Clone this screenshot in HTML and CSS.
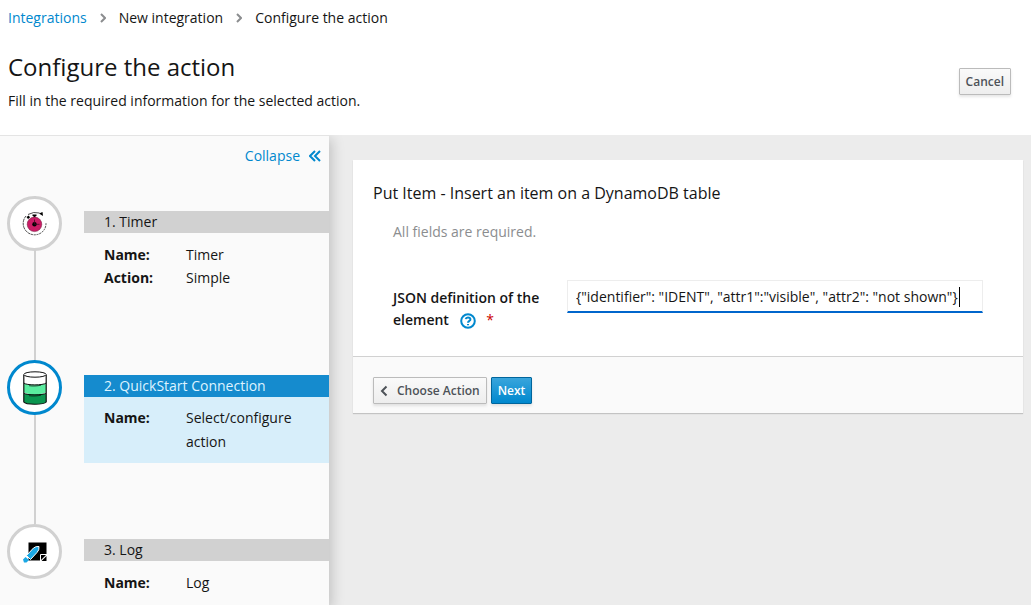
FILE: index.html
```html
<!DOCTYPE html>
<html lang="en">
<head>
<meta charset="utf-8">
<title>Configure the action</title>
<link rel="stylesheet" href="styles.css">
</head>
<body>
<header class="page-header">
  <nav aria-label="Breadcrumb">
    <ol class="breadcrumb">
      <li><a href="#">Integrations</a></li>
      <li><svg class="separator" viewBox="0 0 6 10" aria-hidden="true"><path d="M1 1l4 4-4 4"/></svg>New integration</li>
      <li><svg class="separator" viewBox="0 0 6 10" aria-hidden="true"><path d="M1 1l4 4-4 4"/></svg>Configure the action</li>
    </ol>
  </nav>
  <div class="title-row">
    <div>
      <h1>Configure the action</h1>
      <p>Fill in the required information for the selected action.</p>
    </div>
    <button class="btn" type="button">Cancel</button>
  </div>
</header>
<div class="workspace">
  <aside class="sidebar">
    <button class="collapse" type="button">Collapse
      <svg viewBox="0 0 12 12" aria-hidden="true"><path d="M6 1L1 6l5 5M11 1L6 6l5 5"/></svg>
    </button>
    <ol class="steps">
      <li class="step">
        <div class="rail"><span class="circle">
          <svg viewBox="0 0 26 26" aria-hidden="true"><g fill="none" stroke="#222" stroke-width=".8"><path d="M4 5A11.300 11.300 0 0 0 9 23.200" stroke-dasharray="3 .6"/><path d="M9 23.200A11.300 11.300 0 0 0 24 12" stroke-dasharray="2 .8"/><path d="M6 3.500Q11.500 .300 17.500 2"/></g><path d="M17 2.500l3.500-1.500.5 4z"/><path d="M4.500 6l2.300-1.500 1.200 2-2 1.500zM10.500 3.500h4v1.500h-1v2h-2V5h-1z"/><circle cx="12.500" cy="13.300" r="7.300" fill="#cb1c66" stroke="#6b1838" stroke-width=".5"/><circle cx="12.500" cy="13.300" r="2.200"/><path d="M12.500 8.500v4.800H17.500" fill="none" stroke="#400c24" stroke-width=".8"/></svg>
        </span></div>
        <div class="details">
          <h2>1. Timer</h2>
          <dl><dt>Name:</dt><dd>Timer</dd><dt>Action:</dt><dd>Simple</dd></dl>
        </div>
      </li>
      <li class="step active">
        <div class="rail"><span class="circle">
          <svg class="database" viewBox="0 0 24 34" aria-hidden="true"><path d="M.8 23v8c2 3 20 3 22.400 0v-8" fill="#0b9650"/><path d="M.8 13v8c2 3 20 3 22.400 0v-8" fill="#5bec9f"/><path d="M.8 4v8c2 2.500 20 2.500 22.400 0V4" fill="#fff"/><g fill="none" stroke="#111"><path d="M.8 4v27c2 3 20 3 22.400 0V4" stroke-width="1.200"/><ellipse cx="12" cy="3.500" rx="11.200" ry="2.700" fill="#fff" stroke-width="1"/><path d="M.8 12c2 2.500 20 2.500 22.400 0M.8 22c2 2.500 20 2.500 22.400 0"/><path d="M6 14.700c4 .6 8 .4 12-.5M6 24.700c4 .6 8 .4 12-.5" stroke-width=".7"/></g></svg>
        </span></div>
        <div class="details">
          <h2>2. QuickStart Connection</h2>
          <dl><dt>Name:</dt><dd>Select/configure action</dd></dl>
        </div>
      </li>
      <li class="step">
        <div class="rail"><span class="circle">
          <svg viewBox="0 0 26 26" aria-hidden="true"><path d="M6.500 3.500h18v12l-6 6h-12z"/><path d="M24.500 17v5H19.500z"/><path d="M18.500 22v-6.500H25" fill="none" stroke="#fff"/><path d="M4.500 16.500L11.500 9Q14 7 17 7.500Q17.500 11 15 13.500L8.500 20.500Z" fill="#1ba8e5" stroke="#fff"/><path d="M1 20.500l2.500-2.500L7 21l-2.500 2.500H2z" fill="#1ba8e5"/></svg>
        </span></div>
        <div class="details">
          <h2>3. Log</h2>
          <dl><dt>Name:</dt><dd>Log</dd></dl>
        </div>
      </li>
    </ol>
  </aside>
  <main>
    <form class="card">
      <div class="card-body">
        <h2>Put Item - Insert an item on a DynamoDB table</h2>
        <p class="hint">All fields are required.</p>
        <div class="field">
          <label for="definition">JSON definition of the element
            <svg class="help" viewBox="0 0 16 16" aria-hidden="true"><circle cx="8" cy="8" r="6.800"/><path d="M5.700 6.200Q6 4.500 8 4.500C11 4.500 11 7 9.300 8Q8 8.700 8 9.700M8 10.900v1.400"/></svg>
            <span class="required">*</span></label>
          <div class="control">
            <input id="definition" type="text" required autofocus value='{"identifier": "IDENT", "attr1":"visible", "attr2": "not shown"}'>
            <span class="caret"></span>
          </div>
        </div>
      </div>
      <footer>
        <button class="btn" type="button"><svg class="back" viewBox="0 0 8 12" aria-hidden="true"><path d="M6.500 1.500L2 6l4.500 4.500"/></svg>Choose Action</button>
        <button class="btn primary" type="button">Next</button>
      </footer>
    </form>
  </main>
</div>
</body>
</html>
```
FILE: styles.css
```css
* { box-sizing: border-box; }
body {
  margin: 0;
  height: 100vh;
  display: flex;
  flex-direction: column;
  font: 14px/22px "Open Sans", sans-serif;
  color: #151515;
  background: #fff;
}
h1, h2, p, ol, dl, dd { margin: 0; padding: 0; }
ol { list-style: none; }
h1, h2 { font-weight: 400; }
a { color: #0088ce; text-decoration: none; }
button, input { font: inherit; }
svg { flex: none; }

.page-header { padding: 7px 20px 23px 8px; }
.breadcrumb { display: flex; }
.breadcrumb li { display: flex; align-items: center; }
.separator { width: 6px; height: 10px; margin: 0 13px; fill: none; stroke: #8b8d8f; stroke-width: 2; }
.title-row { display: flex; align-items: center; justify-content: space-between; margin-top: 22px; }
h1 { font-size: 24px; line-height: 32px; }
.title-row p { margin-top: 7px; }
.btn {
  display: inline-flex;
  align-items: center;
  padding: 1px 6px;
  border: 1px solid #bbb;
  border-radius: 1px;
  background: linear-gradient(#fafafa, #ededed);
  box-shadow: 0 2px 3px rgba(3, 3, 3, .1);
  color: #4d5258;
  font-size: 12px;
  font-weight: 600;
  line-height: 22px;
  height: 27px;
}
.primary { border-color: #00659c; background: linear-gradient(#39a5dc, #0088ce); color: #fff; }
.back { width: 8px; height: 12px; margin-right: 9px; fill: none; stroke: #4d5258; stroke-width: 2; }

.workspace {
  flex: 1;
  min-height: 0;
  display: grid;
  grid-template: minmax(0, 1fr) / 329px 1fr;
  overflow: hidden;
  background: #ececec;
}
.sidebar {
  border-top: 1px solid #e4e4e4;
  background: #fafafa;
  box-shadow: 3px 4px 12px rgba(3, 3, 3, .18);
  overflow: hidden;
}
.collapse {
  display: flex;
  align-items: center;
  gap: 9px;
  margin: 9px 8px 0 auto;
  padding: 0;
  border: 0;
  background: none;
  color: #0088ce;
}
.collapse svg { width: 12px; height: 12px; fill: none; stroke: currentColor; stroke-width: 2; }
.steps { margin-top: 29px; }
.step { display: grid; grid-template-columns: 84px 1fr; min-height: 164px; }
.rail { padding-left: 7px; background: linear-gradient(#d1d1d1, #d1d1d1) 34px 0 / 2px 100% no-repeat; }
.step:last-child .rail { background: none; }
.circle {
  display: flex;
  align-items: center;
  justify-content: center;
  width: 55px;
  height: 55px;
  border: 3px solid #d1d1d1;
  border-radius: 50%;
  background: #fff;
}
.circle svg { width: 26px; height: 26px; }
.circle .database { width: 24px; height: 34px; }
.details { align-self: start; margin-top: 15px; }
.details h2 { padding-left: 20px; background: #d1d1d1; font-size: 14px; line-height: 22px; }
.details dl { display: grid; grid-template-columns: 82px 1fr; padding: 10px 20px; line-height: 23px; }
dt { font-weight: 700; }
.active .circle { border-color: #0088ce; }
.active .details h2 { background: #158bce; color: #def3ff; }
.active dl { background: #d7eefa; line-height: 24px; padding-top: 9px; padding-bottom: 9px; }

main { padding: 25px 8px 24px 24px; }
.card { background: #fff; box-shadow: 0 1px 1px rgba(3, 3, 3, .175); }
.card-body { padding: 20px 20px 25px; }
.card h2 { font-size: 16px; line-height: 26px; }
.hint { margin: 15px 20px 0; color: #8b8d8f; }
.field { display: grid; grid-template-columns: 154px 1fr; gap: 20px; align-items: start; margin: 37px 20px 0; }
label { margin-top: 7px; font-weight: 600; }
.help { width: 16px; height: 16px; margin: 0 7px; vertical-align: -4px; fill: none; stroke: #0088ce; stroke-width: 2; }
.required { color: #c00; font-weight: 400; }
.control { position: relative; height: 33px; }
input {
  width: 100%;
  height: 33px;
  padding: 0 8px;
  border: 1px solid #ededed;
  border-bottom: 2px solid #06c;
  outline: 0;
  background: #fff;
  color: #151515;
  caret-color: transparent;
}
.caret { position: absolute; top: 7px; left: 392px; width: 1px; height: 20px; background: #000; }
.card footer { display: flex; gap: 4px; padding: 20px 20px 9px; border-top: 1px solid #d1d1d1; background: #fafafa; }
```
